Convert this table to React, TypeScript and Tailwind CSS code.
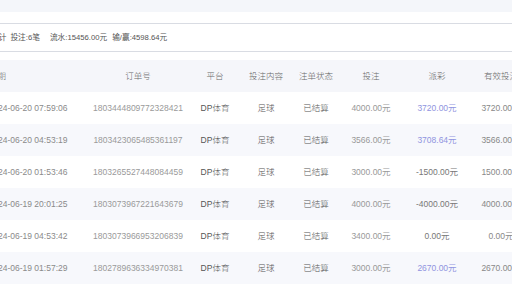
import React from "react";

const rows = [
  { d: "2024-06-20 07:59:06", o: "1803444809772328421", bet: "4000.00元", pay: "3720.00元", pos: true, eff: "3720.00元" },
  { d: "2024-06-20 04:53:19", o: "1803423065485361197", bet: "3566.00元", pay: "3708.64元", pos: true, eff: "3566.00元" },
  { d: "2024-06-20 01:53:46", o: "1803265527448084459", bet: "3000.00元", pay: "-1500.00元", pos: false, eff: "1500.00元" },
  { d: "2024-06-19 20:01:25", o: "1803073967221643679", bet: "4000.00元", pay: "-4000.00元", pos: false, eff: "4000.00元" },
  { d: "2024-06-19 04:53:42", o: "1803073966953206839", bet: "3400.00元", pay: "0.00元", pos: false, eff: "0.00元" },
  { d: "2024-06-19 01:57:29", o: "1802789636334970381", bet: "3000.00元", pay: "2670.00元", pos: true, eff: "2670.00元" },
];

const font = { fontFamily: '"Liberation Sans", "Noto Sans CJK SC", sans-serif' };

export default function App() {
  return (
    <div className="w-[512px] h-[288px] overflow-hidden bg-white" style={font}>
      <div className="h-[12px] bg-[#f4f6fa]" />
      <div className="h-[11px] bg-white" />
      <div className="h-[29px] border-y border-[#d9dce3] flex items-center -ml-[9px] text-[7.7px] text-[#555]">
        <span className="mr-[4px]">合计</span>
        <span className="mr-[10px]">投注:6笔</span>
        <span className="mr-[5px]">流水:15456.00元</span>
        <span>输/赢:4598.64元</span>
      </div>
      <div className="h-[8px]" />
      <div className="-ml-[30px] w-[560px] text-[8.5px]">
        <div className="flex h-[32px] items-center bg-[#f5f6fa] text-[#666] font-light">
          <div className="w-[116px] pl-[19px]">日期</div>
          <div className="w-[104px] text-center">订单号</div>
          <div className="w-[50px] text-center">平台</div>
          <div className="w-[52px] text-center">投注内容</div>
          <div className="w-[48px] text-center">注单状态</div>
          <div className="w-[62px] text-center">投注</div>
          <div className="w-[70px] text-center">派彩</div>
          <div className="w-[58px] text-center whitespace-nowrap">有效投注</div>
        </div>
        {rows.map((r, i) => (
          <div key={i} className={`flex h-[32px] items-center ${i % 2 === 1 ? "bg-[#f7f8fc]" : "bg-white"}`}>
            <div className="w-[116px] text-center text-[#8a8a8a]">{r.d}</div>
            <div className="w-[104px] text-center text-[#9a9a9a]">{r.o}</div>
            <div className="w-[50px] text-center text-[#555] font-light">DP体育</div>
            <div className="w-[52px] text-center text-[#555] font-light">足球</div>
            <div className="w-[48px] text-center text-[#555] font-light">已结算</div>
            <div className="w-[62px] text-center text-[#999]">{r.bet}</div>
            <div className={`w-[70px] text-center ${r.pos ? "text-[#9094e0]" : "text-[#777]"}`}>{r.pay}</div>
            <div className="w-[58px] text-center text-[#888] whitespace-nowrap">{r.eff}</div>
          </div>
        ))}
      </div>
    </div>
  );
}
